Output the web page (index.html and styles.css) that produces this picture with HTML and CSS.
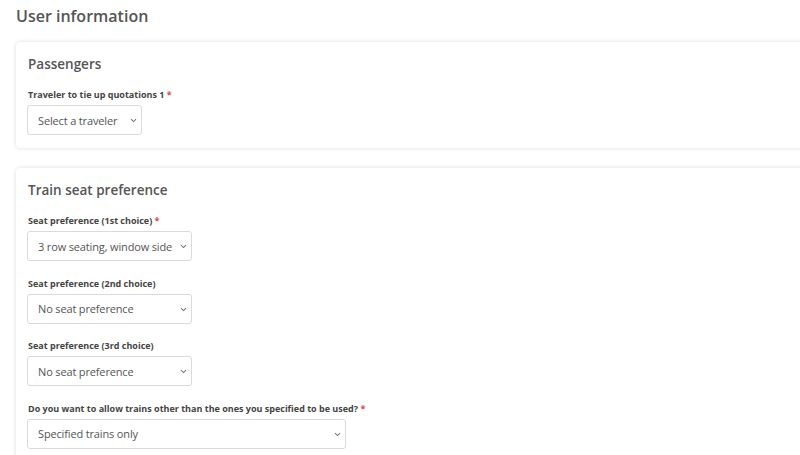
FILE: index.html
```html
<!DOCTYPE html>
<html lang="en">
<head>
  <meta charset="UTF-8" />
  <meta name="viewport" content="width=device-width, initial-scale=1.0"/>
  <title>User information</title>
  <link rel="stylesheet" href="styles.css">
</head>
<body>

  <div class="page">
    <h1 class="page-title">User information</h1>

    <section class="card">
      <h2 class="card-title">Passengers</h2>
      <div class="field">
        <label for="traveler">Traveler to tie up quotations 1 <span class="req">*</span></label>
        <span class="select-wrap select-sm">
          <select id="traveler">
            <option>Select a traveler</option>
          </select>
          <svg class="chevron" width="7" height="5" viewBox="0 0 7 5"><path d="M1 1.2 L3.5 3.6 L6 1.2" fill="none" stroke="#777" stroke-width="1.1"/></svg>
        </span>
      </div>
    </section>

    <section class="card">
      <h2 class="card-title">Train seat preference</h2>
      <div class="field">
        <label for="seat1">Seat preference (1st choice) <span class="req">*</span></label>
        <span class="select-wrap select-md">
          <select id="seat1">
            <option>3 row seating, window side</option>
          </select>
          <svg class="chevron" width="7" height="5" viewBox="0 0 7 5"><path d="M1 1.2 L3.5 3.6 L6 1.2" fill="none" stroke="#777" stroke-width="1.1"/></svg>
        </span>
      </div>
      <div class="field">
        <label for="seat2">Seat preference (2nd choice)</label>
        <span class="select-wrap select-md">
          <select id="seat2">
            <option>No seat preference</option>
          </select>
          <svg class="chevron" width="7" height="5" viewBox="0 0 7 5"><path d="M1 1.2 L3.5 3.6 L6 1.2" fill="none" stroke="#777" stroke-width="1.1"/></svg>
        </span>
      </div>
      <div class="field">
        <label for="seat3">Seat preference (3rd choice)</label>
        <span class="select-wrap select-md">
          <select id="seat3">
            <option>No seat preference</option>
          </select>
          <svg class="chevron" width="7" height="5" viewBox="0 0 7 5"><path d="M1 1.2 L3.5 3.6 L6 1.2" fill="none" stroke="#777" stroke-width="1.1"/></svg>
        </span>
      </div>
      <div class="field">
        <label for="trains">Do you want to allow trains other than the ones you specified to be used? <span class="req">*</span></label>
        <span class="select-wrap select-lg">
          <select id="trains">
            <option>Specified trains only</option>
          </select>
          <svg class="chevron" width="7" height="5" viewBox="0 0 7 5"><path d="M1 1.2 L3.5 3.6 L6 1.2" fill="none" stroke="#777" stroke-width="1.1"/></svg>
        </span>
      </div>
    </section>
  </div>

</body>
</html>
```

FILE: styles.css
```css
html {
  overflow: hidden;
}

body {
  font-family: 'Open Sans', 'Noto Sans', sans-serif;
  background: #ffffff;
  color: #555;
  margin: 0;
}

.page {
  padding: 0 0 0 16px;
}

.page-title {
  font-size: 16px;
  font-weight: 600;
  color: #555;
  margin: 0 0 14px 0;
  padding-top: 4px;
  line-height: 24px;
}

.card {
  background: #ffffff;
  border-radius: 4px;
  box-shadow: 0 0 4px rgba(0, 0, 0, 0.14);
  margin-right: -20px;
  padding: 12px 12px 13px 11px;
  margin-bottom: 20px;
}

.card-title {
  font-size: 13.5px;
  font-weight: 600;
  color: #555;
  margin: 0 0 15px 1px;
  line-height: 20px;
}

.field {
  margin-bottom: 16.5px;
}

.field:last-child {
  margin-bottom: 0;
}

label {
  display: block;
  font-size: 9px;
  font-weight: 700;
  color: #444;
  line-height: 12px;
  margin: 0 0 4px 1px;
}

.req {
  color: #e04848;
}

.select-wrap {
  position: relative;
  display: block;
}

.select-sm {
  width: 115px;
}

.select-md {
  width: 165px;
}

.select-lg {
  width: 319px;
}

select {
  display: block;
  width: 100%;
  box-sizing: border-box;
  appearance: none;
  -webkit-appearance: none;
  font-family: 'Open Sans', 'Noto Sans', sans-serif;
  font-size: 11px;
  letter-spacing: -0.15px;
  color: #555;
  height: 30px;
  padding: 0 14px 0 10px;
  border: 1px solid #dadada;
  border-radius: 3px;
  background-color: #fff;
  outline: none;
}

.chevron {
  position: absolute;
  right: 5px;
  top: 13px;
  pointer-events: none;
}
```
